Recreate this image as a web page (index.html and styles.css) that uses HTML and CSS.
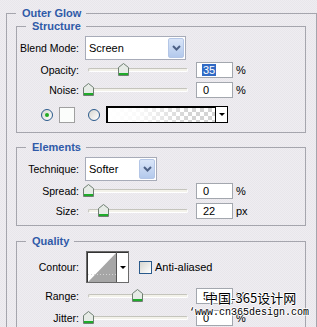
FILE: index.html
```html
<!DOCTYPE html>
<html lang="en">
<head>
    <meta charset="UTF-8">
    <meta name="viewport" content="width=device-width, initial-scale=1.0">
    <title>Outer Glow</title>
    <link rel="stylesheet" href="styles.css">
</head>
<body>
    <fieldset class="group outer">
        <legend>Outer Glow</legend>

        <fieldset class="group sub structure">
            <legend>Structure</legend>
            <div class="row">
                <span class="label">Blend Mode:</span>
                <div class="select blend">
                    <span class="select-text">Screen</span>
                    <span class="select-btn">
                        <svg width="9" height="6" viewBox="0 0 9 6"><polyline points="1,1 4.5,4.5 8,1" fill="none" stroke="#4d6185" stroke-width="2"/></svg>
                    </span>
                </div>
            </div>
            <div class="row slider-row first">
                <span class="label">Opacity:</span>
                <div class="slider">
                    <div class="track"></div>
                    <svg class="thumb" style="left: 30px" width="11" height="13" viewBox="0 0 11 13"><path d="M0.5 4.5 L5.5 0.5 L10.5 4.5 V12.5 H0.5 Z" fill="#e6ebe6" stroke="#6f7f72"/><rect x="1" y="10" width="9" height="2" fill="#1faa2a"/></svg>
                </div>
                <span class="field"><span class="sel">35</span></span>
                <span class="unit">%</span>
            </div>
            <div class="row slider-row">
                <span class="label">Noise:</span>
                <div class="slider">
                    <div class="track"></div>
                    <svg class="thumb" style="left: -5px" width="11" height="13" viewBox="0 0 11 13"><path d="M0.5 4.5 L5.5 0.5 L10.5 4.5 V12.5 H0.5 Z" fill="#e6ebe6" stroke="#6f7f72"/><rect x="1" y="10" width="9" height="2" fill="#1faa2a"/></svg>
                </div>
                <span class="field">0</span>
                <span class="unit">%</span>
            </div>
            <div class="row color-row">
                <span class="radio"><span class="radio-dot"></span></span>
                <span class="swatch"></span>
                <span class="radio second"></span>
                <div class="gradient">
                    <span class="gradient-fill"></span>
                    <span class="gradient-arrow"><span class="tri"></span></span>
                </div>
            </div>
        </fieldset>

        <fieldset class="group sub elements">
            <legend>Elements</legend>
            <div class="row">
                <span class="label">Technique:</span>
                <div class="select technique">
                    <span class="select-text">Softer</span>
                    <span class="select-btn">
                        <svg width="9" height="6" viewBox="0 0 9 6"><polyline points="1,1 4.5,4.5 8,1" fill="none" stroke="#4d6185" stroke-width="2"/></svg>
                    </span>
                </div>
            </div>
            <div class="row slider-row first">
                <span class="label">Spread:</span>
                <div class="slider">
                    <div class="track"></div>
                    <svg class="thumb" style="left: -5px" width="11" height="13" viewBox="0 0 11 13"><path d="M0.5 4.5 L5.5 0.5 L10.5 4.5 V12.5 H0.5 Z" fill="#e6ebe6" stroke="#6f7f72"/><rect x="1" y="10" width="9" height="2" fill="#1faa2a"/></svg>
                </div>
                <span class="field">0</span>
                <span class="unit">%</span>
            </div>
            <div class="row slider-row">
                <span class="label">Size:</span>
                <div class="slider">
                    <div class="track"></div>
                    <svg class="thumb" style="left: 10px" width="11" height="13" viewBox="0 0 11 13"><path d="M0.5 4.5 L5.5 0.5 L10.5 4.5 V12.5 H0.5 Z" fill="#e6ebe6" stroke="#6f7f72"/><rect x="1" y="10" width="9" height="2" fill="#1faa2a"/></svg>
                </div>
                <span class="field">22</span>
                <span class="unit">px</span>
            </div>
        </fieldset>

        <fieldset class="group sub quality">
            <legend>Quality</legend>
            <div class="row contour-row">
                <span class="label">Contour:</span>
                <div class="contour">
                    <svg class="contour-graph" width="28" height="29" viewBox="0 0 28 29">
                        <polygon points="0,29 28,0 28,29" fill="#a6a6a6"/>
                        <line x1="0" y1="21.5" x2="28" y2="21.5" stroke="#d4d4d4" stroke-dasharray="1 2"/>
                    </svg>
                    <span class="contour-arrow"><span class="tri"></span></span>
                </div>
                <span class="check"></span>
                <span class="check-text">Anti-aliased</span>
            </div>
            <div class="row slider-row range">
                <span class="label">Range:</span>
                <div class="slider">
                    <div class="track"></div>
                    <svg class="thumb" style="left: 44px" width="11" height="13" viewBox="0 0 11 13"><path d="M0.5 4.5 L5.5 0.5 L10.5 4.5 V12.5 H0.5 Z" fill="#e6ebe6" stroke="#6f7f72"/><rect x="1" y="10" width="9" height="2" fill="#1faa2a"/></svg>
                </div>
                <span class="field">50</span>
                <span class="unit">%</span>
            </div>
            <div class="row slider-row jitter">
                <span class="label">Jitter:</span>
                <div class="slider">
                    <div class="track"></div>
                    <svg class="thumb" style="left: -5px" width="11" height="13" viewBox="0 0 11 13"><path d="M0.5 4.5 L5.5 0.5 L10.5 4.5 V12.5 H0.5 Z" fill="#e6ebe6" stroke="#6f7f72"/><rect x="1" y="10" width="9" height="2" fill="#1faa2a"/></svg>
                </div>
                <span class="field">0</span>
                <span class="unit">%</span>
            </div>
        </fieldset>
    </fieldset>

    <div class="watermark">
        <div class="wm-cn">中国-365设计网</div>
        <div class="wm-url">‘www.cn365design.com</div>
    </div>
</body>
</html>
```

FILE: styles.css
```css
html, body {
    overflow: hidden;
}

body {
    margin: 0;
    font-family: "Liberation Sans", Arial, sans-serif;
    font-size: 10.5px;
    color: #000;
    background-color: #ecebef;
    background-image: repeating-conic-gradient(#efedf1 0 25%, #e8e6eb 0 50%);
    background-size: 2px 2px;
    position: relative;
}

.group {
    border: 1px solid #a5a5ad;
    padding: 0;
    min-width: 0;
}

.group legend {
    margin-left: 9px;
    padding: 0 5px 0 6px;
    font-size: 11px;
    font-weight: bold;
    line-height: 13px;
    color: #2f5aa8;
}

.outer {
    margin: 7px 0 0 6px;
    padding-bottom: 20px;
}

.sub {
    margin: 0 10px 0 9px;
}

.structure {
    padding: 3px 0 9px 0;
}

.elements {
    margin-top: 8px;
    padding: 3px 0 6px 0;
}

.quality {
    margin-top: 9px;
    padding: 3px 0 10px 0;
}

.row {
    display: flex;
    align-items: center;
}

.label {
    width: 62px;
    margin-right: 6px;
    flex-shrink: 0;
    text-align: right;
}

/* dropdowns */
.select {
    height: 24px;
    box-sizing: border-box;
    border: 1px solid #a7abb8;
    background: #fff;
    display: flex;
    align-items: stretch;
}

.blend {
    width: 101px;
}

.technique {
    width: 72px;
}

.select-text {
    flex: 1;
    padding-left: 3px;
    display: flex;
    align-items: center;
    font-size: 11px;
}

.select-btn {
    width: 16px;
    margin: 1px;
    box-sizing: border-box;
    border: 1px solid #b4c6e6;
    border-radius: 2px;
    background: linear-gradient(#d9e5f8, #b3c9ec);
    display: flex;
    align-items: center;
    justify-content: center;
}

/* sliders */
.slider-row {
    height: 16px;
    margin-top: 4px;
}

.slider-row.first {
    margin-top: 2px;
}

.slider-row.range {
    margin-top: 5px;
}

.slider-row.jitter {
    margin-top: 6px;
}

.slider {
    position: relative;
    width: 100px;
    height: 16px;
    margin-left: 3px;
    display: flex;
    align-items: center;
}

.track {
    width: 100%;
    height: 4px;
    box-sizing: border-box;
    border: 1px solid #c4c4bc;
    border-bottom-color: #fff;
    border-right-color: #fff;
    border-radius: 2px;
    background: #f3f2ea;
}

.thumb {
    position: absolute;
    top: 1px;
}

.field {
    width: 37px;
    height: 16px;
    box-sizing: border-box;
    margin-left: 8px;
    padding-left: 6px;
    border: 1px solid #a3a7ae;
    background: #fff;
    display: flex;
    align-items: center;
    font-size: 11px;
}

.field .sel {
    background: #316ac5;
    color: #fff;
    line-height: 12px;
    padding: 0 1px;
    margin-left: -1px;
}

.unit {
    margin-left: 3px;
    font-size: 11px;
}

/* color choice */
.color-row {
    height: 17px;
    margin-top: 8px;
}

.radio {
    width: 12px;
    height: 12px;
    box-sizing: border-box;
    margin-left: 24px;
    border: 1px solid #2a5a8c;
    border-radius: 50%;
    background: linear-gradient(135deg, #d6d6d0, #fff);
    display: flex;
    align-items: center;
    justify-content: center;
}

.radio.second {
    margin-left: 13px;
}

.radio-dot {
    width: 4px;
    height: 4px;
    border-radius: 50%;
    background: #22aa22;
}

.swatch {
    width: 16px;
    height: 16px;
    box-sizing: border-box;
    margin-left: 6px;
    border: 1px solid #a0a0a0;
    background: #fbfdfb;
}

.gradient {
    width: 122px;
    height: 17px;
    box-sizing: border-box;
    margin-left: 6px;
    border: 1px solid #000;
    box-shadow: inset 1px 1px 0 #000;
    display: flex;
}

.gradient-fill {
    flex: 1;
    margin: 1px 0 0 1px;
    background:
        linear-gradient(to right, #fff 0%, rgba(255, 255, 255, 0.85) 30%, rgba(255, 255, 255, 0) 75%),
        repeating-conic-gradient(#d4d4d4 0 25%, #fff 0 50%) 0 0 / 8px 8px;
}

.gradient-arrow {
    width: 11px;
    border-left: 1px solid #000;
    background: #fff;
    display: flex;
    align-items: center;
    justify-content: center;
}

.tri {
    width: 0;
    height: 0;
    border-left: 3px solid transparent;
    border-right: 3px solid transparent;
    border-top: 3px solid #000;
}

/* contour */
.contour-row {
    height: 32px;
}

.contour {
    width: 43px;
    height: 32px;
    box-sizing: border-box;
    margin-left: 1px;
    border: 1px solid #6a6a6a;
    box-shadow: inset 1px 1px 0 #333;
    background: #fff;
    display: flex;
}

.contour-graph {
    margin: 1px 0 0 1px;
    display: block;
}

.contour-arrow {
    flex: 1;
    border-left: 1px solid #555;
    display: flex;
    align-items: center;
    justify-content: center;
}

.check {
    width: 13px;
    height: 13px;
    box-sizing: border-box;
    margin-left: 10px;
    border: 1px solid #2a5a8c;
    background: linear-gradient(135deg, #d6d6d0, #fff);
}

.check-text {
    margin-left: 3px;
    font-size: 11px;
}

/* watermark */
.watermark {
    position: absolute;
    left: 189px;
    top: 289px;
    color: #000;
    text-shadow: 1px 0 0 #fff, -1px 0 0 #fff, 0 1px 0 #fff, 0 -1px 0 #fff;
}

.wm-cn {
    margin-left: 16px;
    font-family: "Noto Sans CJK SC", sans-serif;
    font-size: 13px;
    line-height: 17px;
}

.wm-url {
    font-family: "Liberation Mono", monospace;
    font-size: 10px;
    line-height: 14px;
}
```
